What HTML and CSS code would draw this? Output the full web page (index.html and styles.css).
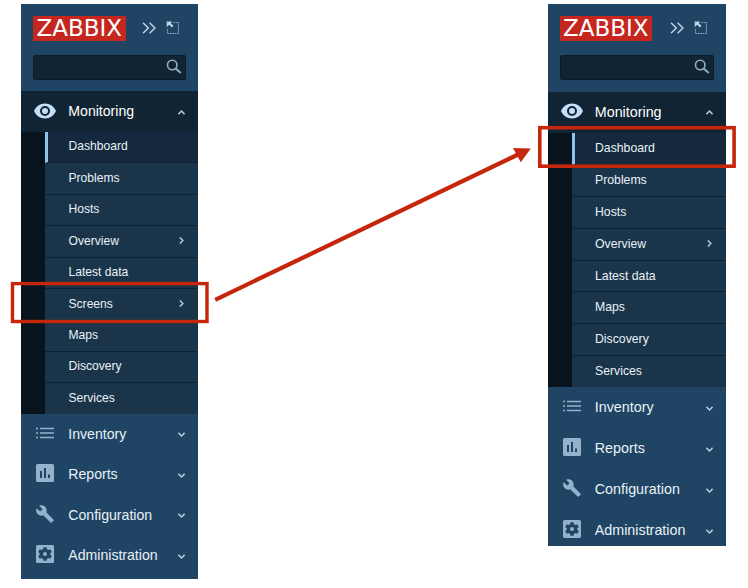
FILE: index.html
```
<!DOCTYPE html>
<html lang="en">
<head>
<meta charset="utf-8">
<title>Zabbix menu</title>
<link rel="stylesheet" href="styles.css">
</head>
<body>
<svg class="defs" aria-hidden="true">
  <symbol id="more" viewBox="0 0 14 12"><path d="M1 .7l5.300 5.300L1 11.300M7.600.7l5.300 5.300-5.300 5.300" fill="none" stroke="currentColor" stroke-width="1.500"/></symbol>
  <symbol id="kiosk" viewBox="0 0 14 14"><path d="M7.500 1.500H12.500V12.500H1.500V7.500" fill="none" stroke="currentColor" stroke-width="1" stroke-dasharray="1.500 .8" opacity=".75"/><path d="M.7.6h5.600L4.800 2.100 7.500 4.900 5.900 6.400 3.100 3.700.7 6.200z" fill="currentColor"/></symbol>
  <symbol id="search" viewBox="0 0 16 16"><circle cx="6.200" cy="6" r="4.700" fill="none" stroke="currentColor" stroke-width="1.600"/><path d="M9.700 9.400l5 4.600" stroke="currentColor" stroke-width="2"/></symbol>
  <symbol id="eye" viewBox="0 0 22 16"><path fill-rule="evenodd" fill="currentColor" d="M11 .4C6 .4 1.800 3.500 0 8c1.800 4.500 6 7.500 11 7.500S20.200 12.500 22 8C20.200 3.500 16 .4 11 .4zM11 13a5 5 0 1 1 0-10 5 5 0 0 1 0 10zm0-2a3 3 0 1 0 0-6 3 3 0 0 0 0 6z"/></symbol>
  <symbol id="list" viewBox="0 0 18 12"><path d="M0 1.500h2M0 6h2M0 10.500h2M4 1.500h14M4 6h14M4 10.500h14" stroke="currentColor" stroke-width="1.700"/></symbol>
  <symbol id="chart" viewBox="0 0 18 18"><path fill-rule="evenodd" fill="currentColor" d="M1.500 0h15Q18 0 18 1.500v15q0 1.500-1.500 1.500h-15Q0 18 0 16.500v-15Q0 0 1.500 0zM4 7v7h2V7zM8 4v10h2V4zM12 10.500V14h2v-3.500z"/></symbol>
  <symbol id="wrench" viewBox="0.800 0.800 22.400 22.400"><path fill="currentColor" d="M22.700 19l-9.100-9.100c.9-2.300.4-5-1.500-6.900-2-2-5-2.400-7.400-1.300L9 6 6 9 1.600 4.700C.4 7.100.9 10.100 2.900 12.100c1.900 1.900 4.600 2.400 6.900 1.500l9.100 9.100c.4.4 1 .4 1.400 0l2.300-2.300c.5-.4.5-1.100.1-1.400z"/></symbol>
  <symbol id="gear" viewBox="0 0 18 18"><path fill-rule="evenodd" fill="currentColor" d="M1.500 0h15Q18 0 18 1.500v15q0 1.500-1.500 1.500h-15Q0 18 0 16.500v-15Q0 0 1.500 0zM7.500 2.200L7.100 4.100 5.700 4.900 3.800 4.300 2.200 7 3.700 8.300V9.700L2.200 11 3.800 13.700 5.700 13.100 7.100 13.900 7.500 15.800H10.500L10.900 13.900 12.300 13.100 14.200 13.700 15.800 11 14.300 9.700V8.300L15.800 7 14.200 4.300 12.300 4.900 10.900 4.100 10.500 2.200zM9 7a2 2 0 1 1 0 4 2 2 0 0 1 0-4z"/></symbol>
  <symbol id="chev" viewBox="0 0 6 6"><path d="M.4 1.600L3 4.200 5.600 1.600" fill="none" stroke="currentColor" stroke-width="1.200"/></symbol>
</svg>
<main class="stage">
  <nav class="sidebar before">
    <header class="head">
      <div class="brand"><span class="logo">ZABBIX</span><svg class="more"><use href="#more"/></svg><svg class="kiosk"><use href="#kiosk"/></svg></div>
      <div class="search"><svg><use href="#search"/></svg></div>
    </header>
    <div class="item active"><svg class="icon eye"><use href="#eye"/></svg><span>Monitoring</span><svg class="chev up"><use href="#chev"/></svg></div>
    <ul class="sub">
      <li class="current">Dashboard</li>
      <li>Problems</li>
      <li>Hosts</li>
      <li>Overview<svg class="chev side"><use href="#chev"/></svg></li>
      <li>Latest data</li>
      <li>Screens<svg class="chev side"><use href="#chev"/></svg></li>
      <li>Maps</li>
      <li>Discovery</li>
      <li>Services</li>
    </ul>
    <div class="item"><svg class="icon list"><use href="#list"/></svg><span>Inventory</span><svg class="chev"><use href="#chev"/></svg></div>
    <div class="item"><svg class="icon"><use href="#chart"/></svg><span>Reports</span><svg class="chev"><use href="#chev"/></svg></div>
    <div class="item"><svg class="icon"><use href="#wrench"/></svg><span>Configuration</span><svg class="chev"><use href="#chev"/></svg></div>
    <div class="item"><svg class="icon"><use href="#gear"/></svg><span>Administration</span><svg class="chev"><use href="#chev"/></svg></div>
  </nav>
  <nav class="sidebar after">
    <header class="head">
      <div class="brand"><span class="logo">ZABBIX</span><svg class="more"><use href="#more"/></svg><svg class="kiosk"><use href="#kiosk"/></svg></div>
      <div class="search"><svg><use href="#search"/></svg></div>
    </header>
    <div class="item active"><svg class="icon eye"><use href="#eye"/></svg><span>Monitoring</span><svg class="chev up"><use href="#chev"/></svg></div>
    <ul class="sub">
      <li class="current">Dashboard</li>
      <li>Problems</li>
      <li>Hosts</li>
      <li>Overview<svg class="chev side"><use href="#chev"/></svg></li>
      <li>Latest data</li>
      <li>Maps</li>
      <li>Discovery</li>
      <li>Services</li>
    </ul>
    <div class="item"><svg class="icon list"><use href="#list"/></svg><span>Inventory</span><svg class="chev"><use href="#chev"/></svg></div>
    <div class="item"><svg class="icon"><use href="#chart"/></svg><span>Reports</span><svg class="chev"><use href="#chev"/></svg></div>
    <div class="item"><svg class="icon"><use href="#wrench"/></svg><span>Configuration</span><svg class="chev"><use href="#chev"/></svg></div>
    <div class="item"><svg class="icon"><use href="#gear"/></svg><span>Administration</span><svg class="chev"><use href="#chev"/></svg></div>
  </nav>
  <svg class="notes" viewBox="0 0 748 588">
    <g fill="none" stroke="#c5260c">
      <rect x="12.500" y="283.600" width="194.500" height="37.900" stroke-width="3.400"/>
      <rect x="539.800" y="127.700" width="194.300" height="38.500" stroke-width="3.600"/>
      <path d="M215.200 299.800L518 154.500" stroke-width="4.200"/>
    </g>
    <path d="M530.800 148.400L513 148 520.800 162.300z" fill="#c5260c"/>
  </svg>
</main>
</body>
</html>
```
FILE: styles.css
```
* {
  box-sizing: border-box;
}

body {
  margin: 0;
  background: #fff;
  font-family: "Liberation Sans", Arial, sans-serif;
}

.defs {
  position: absolute;
  width: 0;
  height: 0;
}

.stage {
  position: relative;
  width: 748px;
  height: 588px;
  padding: 4px 22px 0 21px;
  display: flex;
  justify-content: space-between;
  align-items: flex-start;
  overflow: hidden;
}

.sidebar {
  display: flex;
  flex-direction: column;
  overflow: hidden;
  background: #1f4464;
  color: #e9f1f7;
}

.sidebar > * {
  flex-shrink: 0;
}

.before {
  --sub: 31.43px;
  --row: 40.5px;
  --text: 12.1px;
  --title: 14.1px;
  width: 177px;
  height: 574.5px;
}

.after {
  --sub: 31.9px;
  --row: 41px;
  --text: 12.25px;
  --title: 14.3px;
  width: 178.5px;
  height: 542px;
}

.head {
  height: 87px;
  padding: 12px 12px 0;
}

.after .head {
  height: 87.5px;
}

.brand {
  display: flex;
  align-items: center;
  height: 24.5px;
}

.logo {
  width: 92.5px;
  height: 24.5px;
  background: #c5271f;
  color: #fff;
  font: 23px/24.5px "DejaVu Sans", sans-serif;
  text-align: center;
}

.more {
  width: 14px;
  height: 12px;
  margin-left: 16.5px;
  color: #bdd3e6;
}

.after .more {
  margin-left: 17.5px;
}

.kiosk {
  width: 14px;
  height: 14px;
  margin-left: 10px;
  color: #bdd3e6;
}

.search {
  display: flex;
  align-items: center;
  justify-content: flex-end;
  height: 24.5px;
  margin-top: 14.5px;
  padding-right: 3px;
  border: 1px solid #0b1b2a;
  border-radius: 2px;
  background: #112434;
  color: #92aec4;
}

.search svg {
  width: 16px;
  height: 16px;
}

.item {
  display: flex;
  align-items: center;
  height: var(--row);
  padding: 0 13.5px 0 13px;
  font-size: var(--title);
}

.active {
  height: 41px;
  padding-bottom: 1px;
  background: #112434;
  color: #fff;
}

.after .active {
  height: 41.5px;
}

.item span {
  flex: 1;
  margin-left: 11.3px;
  white-space: nowrap;
}

.icon {
  width: 18px;
  height: 18px;
  margin: 0 3px 2px 2px;
  color: #94b2cb;
}

.list {
  height: 12px;
}

.eye {
  width: 22px;
  height: 16px;
  margin: 0 1px 1px 0;
  color: #c3e0f8;
}

.chev {
  width: 7px;
  height: 7px;
  color: #b9cfe1;
  position: relative;
  top: 1px;
}

.up {
  transform: rotate(180deg);
}

.side {
  transform: rotate(-90deg);
  top: 0;
}

.sub {
  margin: 0;
  padding: 0 0 0 24px;
  list-style: none;
  background: #07141d;
}

.sub li {
  display: flex;
  align-items: center;
  justify-content: space-between;
  height: var(--sub);
  padding: 0 13.5px 1.5px 23.5px;
  border-bottom: 1px solid #0c2134;
  background: #1a344a;
  font-size: var(--text);
}

.after .sub li {
  padding-bottom: 1px;
}

.sub li:last-child {
  height: calc(var(--sub) - 1.2px);
  border-bottom: 0;
}

.sub .current {
  border-left: 3px solid #8dc4ee;
  padding-left: 20.5px;
  background: #14293d;
}

.notes {
  position: absolute;
  inset: 0;
  width: 748px;
  height: 588px;
}
```
